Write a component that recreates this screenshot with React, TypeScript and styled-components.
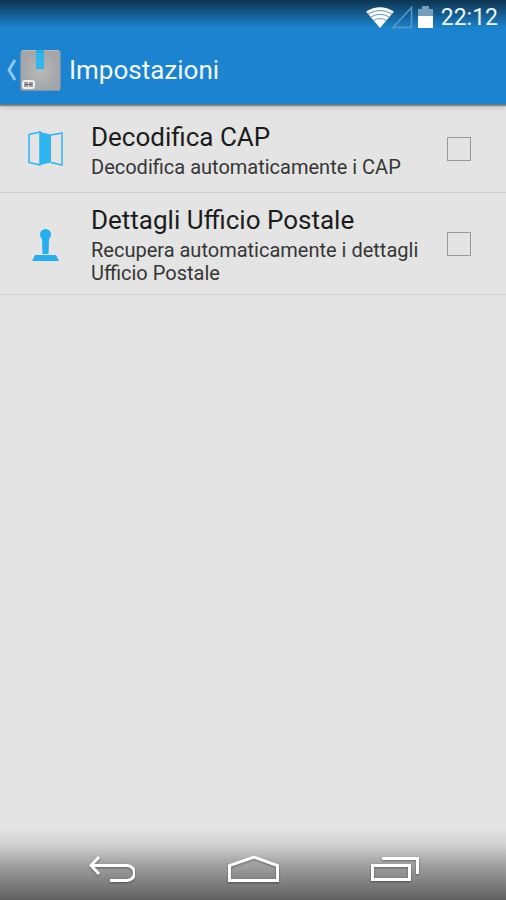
import React, { ReactNode } from "react";
import styled, { createGlobalStyle } from "styled-components";

const GlobalStyle = createGlobalStyle`
  *, *::before, *::after { box-sizing: border-box; }
  body {
    margin: 0;
    background: #e4e4e4;
    color: #1c1c1c;
    font-family: Roboto, "Noto Sans", sans-serif;
  }
`;

const Screen = styled.div`
  min-height: 100vh;
  display: flex;
  flex-direction: column;
`;

const TopArea = styled.div`
  background: linear-gradient(#0e3450 0, #1b83cf 28px, #1b83cf 100%);
  border-bottom: 1px solid #5c7c94;
  box-shadow: 0 1px 1px #8a8a8a, 0 2px 5px rgba(0, 0, 0, 0.2);
  color: #f2f8fd;
`;

const StatusBar = styled.div`
  height: 36px;
  padding: 0 8px;
  display: flex;
  align-items: center;
  justify-content: flex-end;
`;

const Clock = styled.time`
  margin-left: 6px;
  font-size: 23px;
  line-height: 36px;
`;

const ActionBar = styled.header`
  height: 68px;
  padding: 0 6px;
  display: flex;
  align-items: center;
  gap: 8px;
`;

const UpButton = styled.button`
  display: flex;
  align-items: center;
  gap: 3px;
  padding: 0;
  border: 0;
  background: none;
`;

const PageTitle = styled.h1`
  margin: 0;
  font-size: 26px;
  line-height: 32px;
  font-weight: 400;
`;

const Settings = styled.main`
  flex: 1;
`;

const Row = styled.label`
  display: flex;
  align-items: center;
  min-height: 88px;
  padding: 9px 35px 9px 0;
  border-bottom: 1px solid #d0d0d0;
`;

const IconSlot = styled.span`
  width: 91px;
  flex: none;
  display: flex;
  justify-content: center;
`;

const RowText = styled.span`
  flex: 1;
  display: flex;
  flex-direction: column;
  gap: 1px;
`;

const RowTitle = styled.span`
  font-size: 26px;
  line-height: 36px;
`;

const RowSummary = styled.span`
  font-size: 20px;
  line-height: 23px;
  color: #363636;
`;

const Check = styled.input`
  appearance: none;
  flex: none;
  width: 24px;
  height: 24px;
  margin: 0 0 0 16px;
  border: 1px solid #999;

  &:checked {
    background: #2fb4ee;
    box-shadow: inset 0 0 0 4px #e4e4e4;
  }
`;

const NavBar = styled.nav`
  height: 72px;
  padding: 12px 42px 0;
  display: flex;
  align-items: center;
  background: linear-gradient(#e4e4e4 0, #d2d2d2 16px, #a3a3a3 36px, #606060 72px);
`;

const NavButton = styled.button`
  flex: 1;
  height: 48px;
  padding: 0;
  display: flex;
  align-items: center;
  justify-content: center;
  border: 0;
  background: none;

  svg { filter: drop-shadow(0 1px 1px rgba(0, 0, 0, 0.4)); }
`;

function StatusIcons() {
  return (
    <svg width="69" height="24" viewBox="0 0 69 24" aria-hidden="true">
      <path d="M0 5.500Q14-3 28 5.500L14 22Z" fill="#fff" />
      <g fill="none" stroke="#5f97bd" strokeWidth="1">
        <path d="M2 8Q14 1 26 8M4 11.500Q14 5 24 11.500M7 15Q14 10 21 15" />
      </g>
      <path d="M27 21.500H45.500V1.500Z" fill="none" stroke="#579bc9" strokeWidth="1.500" />
      <path d="M52 3H56V0H63V3H67V11H52Z" fill="#769db9" />
      <path d="M52 10H67V22H52Z" fill="#fff" />
    </svg>
  );
}

function BackChevron() {
  return (
    <svg width="11" height="22" viewBox="0 0 11 22" aria-hidden="true">
      <path d="M9 1L3 11L9 21" fill="none" stroke="#8cc8f0" strokeWidth="3" />
    </svg>
  );
}

function ParcelIcon() {
  return (
    <svg width="41" height="41" viewBox="0 0 41 41" aria-hidden="true">
      <defs>
        <radialGradient id="parcel">
          <stop offset="0" stopColor="#b9b9b9" />
          <stop offset="1" stopColor="#a3a5a6" />
        </radialGradient>
      </defs>
      <rect x="0.500" y="0.500" width="40" height="40" rx="2" fill="url(#parcel)" />
      <path d="M2 0.500H39" stroke="#b4b8ba" />
      <path d="M1 40.500H40" stroke="#8a9299" />
      <path d="M16 0H24V19H16Z" fill="#30b5ed" />
      <path d="M16 2H24" stroke="#209dd8" strokeWidth="1" />
      <rect x="2" y="30" width="13" height="9" rx="3" fill="#eee" />
      <path d="M5 32V37M7 32V37M10 32V37M12 32V37M5 34.500H12" stroke="#666" strokeWidth="1.200" />
    </svg>
  );
}

function MapIcon() {
  return (
    <svg width="35" height="35" viewBox="0 0 35 35" aria-hidden="true">
      <path d="M12 1L23 3.500V31.500L12 34Z" fill="#2fb4f2" />
      <path d="M1 3.500L12 1V34L1 31.500ZM23 4L34 2V34L23 31.500" fill="none" stroke="#2fb4f2" strokeWidth="1.500" />
    </svg>
  );
}

function StampIcon() {
  return (
    <svg width="27" height="35" viewBox="0 -3 27 35" aria-hidden="true">
      <path
        d="M8 5.500A5.500 5.500 0 0 1 19 5.500Q19 8 17 10L16.500 25H10.500L10 10Q8 8 8 5.500ZM3 26H24L27 32H0Z"
        fill="#25afee"
      />
    </svg>
  );
}

function BackIcon() {
  return (
    <svg width="46" height="28" viewBox="1 0 46 28" fill="none" stroke="#fff" strokeWidth="3" aria-hidden="true">
      <path d="M11 1L3 9.500L11 18M3 9.500H39A7 7 0 0 1 39 24.500H22" />
    </svg>
  );
}

function HomeIcon() {
  return (
    <svg width="52" height="30" viewBox="0 0 52 30" fill="none" stroke="#fff" strokeWidth="3" aria-hidden="true">
      <path d="M2.500 25.500V10.500L27 2L50.500 10.500V25.500Z" />
    </svg>
  );
}

function RecentsIcon() {
  return (
    <svg width="50" height="28" viewBox="0 0 50 28" fill="none" stroke="#fff" strokeWidth="3" aria-hidden="true">
      <path d="M3.500 9.500H40.500V23.500H3.500ZM13 2.500H48.500V18" />
    </svg>
  );
}

interface SettingProps {
  icon: ReactNode;
  title: string;
  summary: string;
}

function Setting({ icon, title, summary }: SettingProps) {
  return (
    <Row>
      <IconSlot>{icon}</IconSlot>
      <RowText>
        <RowTitle>{title}</RowTitle>
        <RowSummary>{summary}</RowSummary>
      </RowText>
      <Check type="checkbox" />
    </Row>
  );
}

export default function App() {
  return (
    <Screen>
      <GlobalStyle />
      <TopArea>
        <StatusBar>
          <StatusIcons />
          <Clock>22:12</Clock>
        </StatusBar>
        <ActionBar>
          <UpButton type="button" aria-label="Indietro">
            <BackChevron />
            <ParcelIcon />
          </UpButton>
          <PageTitle>Impostazioni</PageTitle>
        </ActionBar>
      </TopArea>
      <Settings>
        <Setting icon={<MapIcon />} title="Decodifica CAP" summary="Decodifica automaticamente i CAP" />
        <Setting
          icon={<StampIcon />}
          title="Dettagli Ufficio Postale"
          summary="Recupera automaticamente i dettagli Ufficio Postale"
        />
      </Settings>
      <NavBar>
        <NavButton type="button" aria-label="Torna indietro"><BackIcon /></NavButton>
        <NavButton type="button" aria-label="Home"><HomeIcon /></NavButton>
        <NavButton type="button" aria-label="App recenti"><RecentsIcon /></NavButton>
      </NavBar>
    </Screen>
  );
}
